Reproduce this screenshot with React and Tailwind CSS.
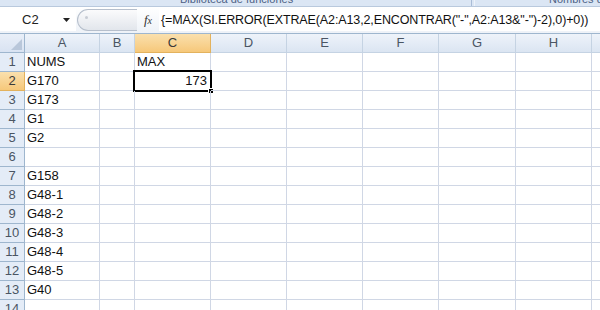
import React from "react";

const cols = [
  { k: "A", w: 75 },
  { k: "B", w: 35 },
  { k: "C", w: 76 },
  { k: "D", w: 76 },
  { k: "E", w: 76 },
  { k: "F", w: 76 },
  { k: "G", w: 77 },
  { k: "H", w: 76 },
  { k: "", w: 76 },
];

const data = {
  1: { A: "NUMS", C: "MAX" },
  2: { A: "G170" },
  3: { A: "G173" },
  4: { A: "G1" },
  5: { A: "G2" },
  7: { A: "G158" },
  8: { A: "G48-1" },
  9: { A: "G48-2" },
  10: { A: "G48-3" },
  11: { A: "G48-4" },
  12: { A: "G48-5" },
  13: { A: "G40" },
};

const font = { fontFamily: '"Liberation Sans", Arial, sans-serif' };

export default function App() {
  const rows = Array.from({ length: 14 }, (_, i) => i + 1);
  return (
    <div className="w-[600px] h-[310px] overflow-hidden bg-white relative" style={font}>
      {/* ribbon remnant */}
      <div className="h-[7px] bg-[#dbe6f4] border-b border-[#b9c9dd] relative overflow-hidden flex">
        <div className="w-[472px] border-r border-[#a9bcd6] relative">
          <span className="absolute left-[180px] top-[-9px] text-[11px] text-[#4d6185] whitespace-nowrap">Biblioteca de funciones</span>
        </div>
        <div className="flex-1 ml-[2px] border-l border-[#eef3fa] relative">
          <span className="absolute left-[74px] top-[-9px] text-[11px] text-[#4d6185] whitespace-nowrap">Nombres definidos</span>
        </div>
      </div>
      {/* formula bar */}
      <div className="h-[26px] flex items-center bg-gradient-to-b from-[#ffffff] to-[#eef2f8]">
        <div className="w-[76px] h-[22px] bg-white flex items-center relative">
          <span className="ml-[22px] text-[13px] text-[#222]">C2</span>
          <svg className="absolute left-[63px] top-[9px]" width="7" height="4" viewBox="0 0 7 4">
            <path d="M0 0 L7 0 L3.5 4 Z" fill="#222" />
          </svg>
        </div>
        <div className="w-[60px] h-[22px] ml-[1px] rounded-l-full border border-r-0 border-[#b6bfcc] bg-gradient-to-b from-[#fbfbfc] to-[#e2e6ec] relative">
          <div className="absolute left-[7px] top-[6px] w-[3px] h-[3px] rounded-full bg-[#c7ccd4]" />
        </div>
        <div className="w-[22px] h-[22px] flex items-center justify-center">
          <span className="text-[13px] italic text-[#333]" style={{ fontFamily: '"Liberation Serif", serif' }}>
            f<span className="text-[10px]">x</span>
          </span>
        </div>
        <div className="flex-1 h-[22px] bg-white flex items-center pl-[2px] overflow-hidden">
          <span className="text-[12.5px] text-[#111] whitespace-nowrap tracking-[-0.12px]">
            {'{=MAX(SI.ERROR(EXTRAE(A2:A13,2,ENCONTRAR("-",A2:A13&"-")-2),0)+0))'}
          </span>
        </div>
      </div>
      {/* column headers */}
      <div className="h-[20px] flex border-t border-[#9eb6ce]">
        <div className="w-[25px] shrink-0 h-full bg-gradient-to-b from-[#e9eff8] to-[#d9e3f2] border-r border-b border-[#9eb6ce] relative">
          <svg className="absolute right-[2px] bottom-[2px]" width="11" height="11" viewBox="0 0 11 11">
            <path d="M11 0 L11 11 L0 11 Z" fill="#b9c7da" />
          </svg>
        </div>
        {cols.map((c, i) => (
          <div
            key={i}
            style={{ width: c.w }}
            className={
              "shrink-0 h-full flex items-center justify-center text-[13px] border-r border-b " +
              (c.k === "C"
                ? "bg-gradient-to-b from-[#fae0ad] to-[#f6c87a] border-[#e3b25d] text-[#3a3a3a]"
                : "bg-gradient-to-b from-[#eef3fa] to-[#dbe5f2] border-[#c5d3e3] text-[#4a5563]")
            }
          >
            {c.k}
          </div>
        ))}
      </div>
      {/* rows */}
      {rows.map((r) => (
        <div key={r} className="h-[19px] flex">
          <div
            className={
              "w-[25px] shrink-0 h-full flex items-center justify-center text-[13px] border-r border-b " +
              (r === 2
                ? "bg-gradient-to-b from-[#fae0ad] to-[#f6c87a] border-[#e3b25d] text-[#3a3a3a]"
                : "bg-[#e4ecf7] border-[#9eb6ce] text-[#4a5563]")
            }
          >
            {r}
          </div>
          {cols.map((c, i) => {
            const v = data[r] && data[r][c.k];
            const sel = r === 2 && c.k === "C";
            return (
              <div
                key={i}
                style={{ width: c.w }}
                className="shrink-0 h-full border-r border-b border-[#d0d7e5] relative flex items-center text-[13px] text-[#111] pl-[2px]"
              >
                {v}
                {sel && (
                  <div className="absolute left-[-2px] top-[-2px] right-[-2px] bottom-[-2px] border-[2px] border-black flex items-center justify-end pr-[3px]">
                    <span>173</span>
                    <div className="absolute right-[-4px] bottom-[-4px] w-[6px] h-[6px] bg-black border border-white" />
                  </div>
                )}
              </div>
            );
          })}
        </div>
      ))}
    </div>
  );
}
